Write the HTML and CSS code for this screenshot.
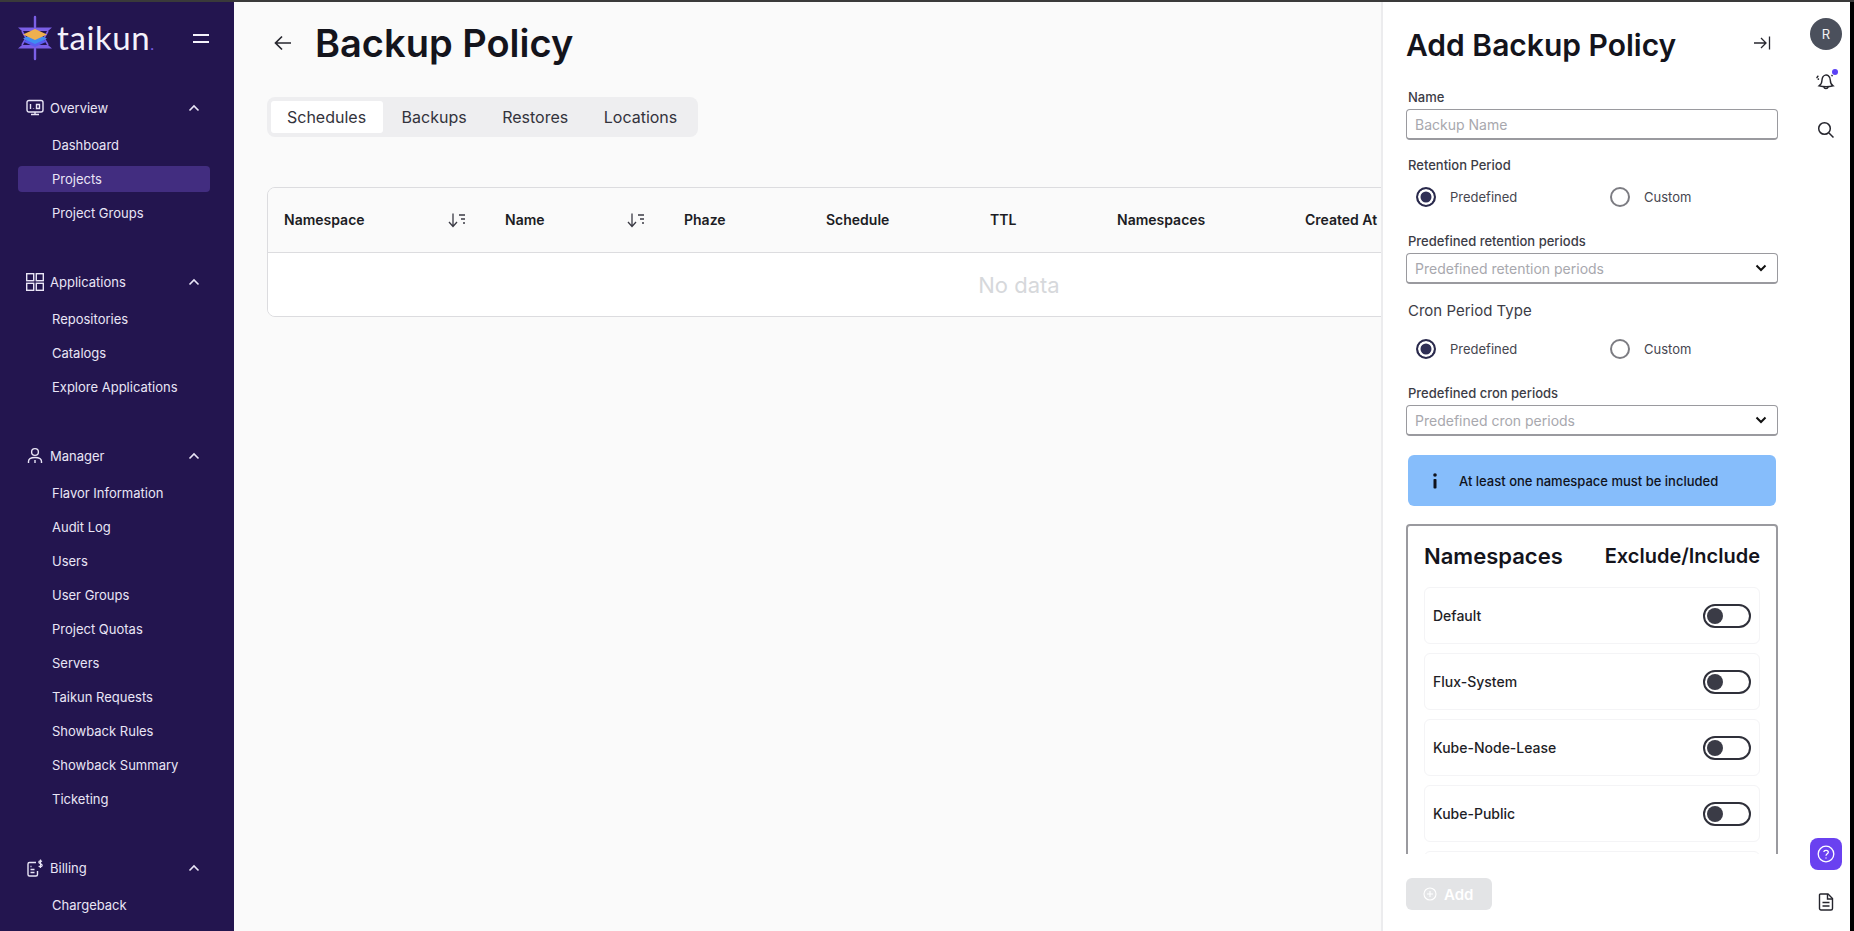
FILE: index.html
```html
<!DOCTYPE html>
<html lang="en">
<head>
    <meta charset="UTF-8">
    <meta name="viewport" content="width=device-width, initial-scale=1.0">
    <title>Backup Policy - Taikun</title>
    <link rel="stylesheet" href="styles.css">
</head>
<body>
    <div class="app">
        <!-- Sidebar -->
        <aside class="sidebar">
            <div class="brand">
                <svg class="brand-mark" width="38" height="46" viewBox="0 0 38 46" fill="none">
                    <path d="M19 2V12M19 34V44" stroke="#7b5fe6" stroke-width="2.4" stroke-linecap="round"/>
                    <path d="M2 12.500H36L32 16H6ZM2 33.500H36L32 30H6Z" fill="#7b5fe6"/>
                    <path d="M6 16L10 23L6 30M32 16L28 23L32 30" stroke="#7b5fe6" stroke-width="1.6"/>
                    <path d="M7 26.500L19 21L31 26.500L19 32Z" fill="#5a5cf0"/>
                    <path d="M7 23.500L19 18L31 23.500L19 29Z" fill="#3f8df2"/>
                    <path d="M7 19.500L19 14L31 19.500L19 25Z" fill="#eeb04f"/>
                </svg>
                <span class="brand-name">taikun<em>.</em></span>
                <button class="menu-btn" aria-label="Menu"><span></span><span></span></button>
            </div>

            <nav class="nav">
                <section class="nav-group">
                    <div class="nav-head">
                        <svg class="nav-icon" width="18" height="18" viewBox="0 0 18 18" fill="none" stroke="currentColor" stroke-width="1.4"><rect x="1" y="1.5" width="16" height="11.5" rx="2"/><path d="M5 15.5H13M9 13V15.5"/><path d="M4.5 5V10M7.5 9.5V10M10.5 5.5H13.5V9.5H10.5Z"/></svg>
                        <span>Overview</span>
                        <svg class="nav-chevron" width="12" height="8" viewBox="0 0 12 8" fill="none" stroke="currentColor" stroke-width="1.6"><path d="M1.5 6.5L6 2L10.5 6.5"/></svg>
                    </div>
                    <a class="nav-item">Dashboard</a>
                    <a class="nav-item active">Projects</a>
                    <a class="nav-item">Project Groups</a>
                </section>

                <section class="nav-group">
                    <div class="nav-head">
                        <svg class="nav-icon" width="18" height="18" viewBox="0 0 18 18" fill="none" stroke="currentColor" stroke-width="1.4"><rect x="0.7" y="0.7" width="7" height="7"/><rect x="10.3" y="0.7" width="7" height="7"/><rect x="0.7" y="10.3" width="7" height="7"/><rect x="10.3" y="10.3" width="7" height="7"/></svg>
                        <span>Applications</span>
                        <svg class="nav-chevron" width="12" height="8" viewBox="0 0 12 8" fill="none" stroke="currentColor" stroke-width="1.6"><path d="M1.5 6.5L6 2L10.5 6.5"/></svg>
                    </div>
                    <a class="nav-item">Repositories</a>
                    <a class="nav-item">Catalogs</a>
                    <a class="nav-item">Explore Applications</a>
                </section>

                <section class="nav-group">
                    <div class="nav-head">
                        <svg class="nav-icon" width="18" height="18" viewBox="0 0 18 18" fill="none" stroke="currentColor" stroke-width="1.4"><circle cx="9" cy="5" r="3.4"/><path d="M2.5 16V14.5C2.5 12 5 10.5 9 10.5S15.500 12 15.500 14.500V16M9 13V16"/></svg>
                        <span>Manager</span>
                        <svg class="nav-chevron" width="12" height="8" viewBox="0 0 12 8" fill="none" stroke="currentColor" stroke-width="1.6"><path d="M1.5 6.5L6 2L10.5 6.5"/></svg>
                    </div>
                    <a class="nav-item">Flavor Information</a>
                    <a class="nav-item">Audit Log</a>
                    <a class="nav-item">Users</a>
                    <a class="nav-item">User Groups</a>
                    <a class="nav-item">Project Quotas</a>
                    <a class="nav-item">Servers</a>
                    <a class="nav-item">Taikun Requests</a>
                    <a class="nav-item">Showback Rules</a>
                    <a class="nav-item">Showback Summary</a>
                    <a class="nav-item">Ticketing</a>
                </section>

                <section class="nav-group">
                    <div class="nav-head">
                        <svg class="nav-icon" width="18" height="18" viewBox="0 0 18 18" fill="none" stroke="currentColor" stroke-width="1.4"><path d="M10 3.500H3.500A1.500 1.500 0 0 0 2 5V15.500A1.500 1.500 0 0 0 3.500 17H10A1.500 1.500 0 0 0 11.500 15.500V12"/><path d="M4.500 7.500H5.500M4.500 10.500H8.500M4.500 13.500H8.500"/><path d="M16 2.500C15 1.500 13 1.500 12.800 3S16.500 4.800 16.200 6.500C16 8 13.800 8 12.700 7M14.500 0.500V9" stroke-width="1.200"/></svg>
                        <span>Billing</span>
                        <svg class="nav-chevron" width="12" height="8" viewBox="0 0 12 8" fill="none" stroke="currentColor" stroke-width="1.6"><path d="M1.5 6.5L6 2L10.5 6.5"/></svg>
                    </div>
                    <a class="nav-item">Chargeback</a>
                </section>
            </nav>
        </aside>

        <main class="main">
            <div class="page-title">
                <svg class="back-icon" width="18" height="16" viewBox="0 0 18 16" fill="none" stroke="#27272f" stroke-width="1.7"><path d="M17 8H1.500M8 1.500L1.500 8L8 14.500"/></svg>
                <h1>Backup Policy</h1>
            </div>

            <div class="tabs">
                <button class="tab active">Schedules</button>
                <button class="tab">Backups</button>
                <button class="tab">Restores</button>
                <button class="tab">Locations</button>
            </div>

            <div class="table-wrap">
                <table class="data-table">
                    <thead>
                        <tr>
                            <th>
                                <div class="th-sort">Namespace
                                    <svg width="18" height="16" viewBox="0 0 18 16" fill="none" stroke="#3a3a44" stroke-width="1.300"><path d="M5 1.500V14M1 10L5 14.500L9 10M11 3H17M13 7H17M15 11H17"/></svg>
                                </div>
                            </th>
                            <th>
                                <div class="th-sort">Name
                                    <svg width="18" height="16" viewBox="0 0 18 16" fill="none" stroke="#3a3a44" stroke-width="1.300"><path d="M5 1.500V14M1 10L5 14.500L9 10M11 3H17M13 7H17M15 11H17"/></svg>
                                </div>
                            </th>
                            <th>Phaze</th>
                            <th>Schedule</th>
                            <th>TTL</th>
                            <th>Namespaces</th>
                            <th>Created At</th>
                        </tr>
                    </thead>
                    <tbody>
                        <tr><td colspan="7" class="no-data">No data</td></tr>
                    </tbody>
                </table>
            </div>
        </main>

        <!-- Add policy drawer -->
        <aside class="drawer">
            <div class="drawer-head">
                <h2>Add Backup Policy</h2>
                <svg class="collapse-icon" width="18" height="16" viewBox="0 0 18 16" fill="none" stroke="#27272f" stroke-width="1.300"><path d="M1 8H13M8 3L13 8L8 13M16.500 1.500V14.500"/></svg>
            </div>

            <form class="drawer-form">
                <label class="field-label">Name</label>
                <div class="input">Backup Name</div>

                <label class="field-label retention">Retention Period</label>
                <div class="radio-row">
                    <div class="radio checked"><i></i>Predefined</div>
                    <div class="radio"><i></i>Custom</div>
                </div>

                <label class="field-label spaced">Predefined retention periods</label>
                <div class="input select">Predefined retention periods
                    <svg width="12" height="8" viewBox="0 0 12 8" fill="none" stroke="#111" stroke-width="2"><path d="M1.500 1.500L6 6L10.500 1.500"/></svg>
                </div>

                <div class="cron-title">Cron Period Type</div>
                <div class="radio-row">
                    <div class="radio checked"><i></i>Predefined</div>
                    <div class="radio"><i></i>Custom</div>
                </div>

                <label class="field-label spaced">Predefined cron periods</label>
                <div class="input select">Predefined cron periods
                    <svg width="12" height="8" viewBox="0 0 12 8" fill="none" stroke="#111" stroke-width="2"><path d="M1.500 1.500L6 6L10.500 1.500"/></svg>
                </div>

                <div class="alert">
                    <svg width="4" height="16" viewBox="0 0 4 16" fill="#10131c"><circle cx="2" cy="2" r="1.800"/><rect x="0.500" y="6" width="3" height="9.500" rx="0.800"/></svg>
                    <span>At least one namespace must be included</span>
                </div>

                <div class="ns-box">
                    <div class="ns-head">
                        <h3>Namespaces</h3>
                        <h4>Exclude/Include</h4>
                    </div>
                    <div class="ns-list">
                        <div class="ns-item">Default<span class="toggle"></span></div>
                        <div class="ns-item">Flux-System<span class="toggle"></span></div>
                        <div class="ns-item">Kube-Node-Lease<span class="toggle"></span></div>
                        <div class="ns-item">Kube-Public<span class="toggle"></span></div>
                        <div class="ns-item"></div>
                    </div>
                </div>
            </form>

            <div class="drawer-foot">
                <button class="add-btn" disabled>
                    <svg width="14" height="14" viewBox="0 0 14 14" fill="none" stroke="#fff" stroke-width="1.100"><circle cx="7" cy="7" r="6"/><path d="M7 4V10M4 7H10"/></svg>
                    Add
                </button>
            </div>
        </aside>

        <!-- Right rail -->
        <div class="rail">
            <div class="avatar">R</div>
            <div class="rail-btn bell">
                <svg width="24" height="24" viewBox="0 0 22 22" fill="none" stroke="#25252d" stroke-width="1.300"><path d="M4.500 15.500L6.500 13.500C7.500 12 7 9.500 8 7.500C9 5.500 11.500 5 13 6C14.500 7 15 8.500 15 10.500C15 12.500 16 14.500 17.500 15.500C13.500 16.500 9 16.500 4.500 15.500Z"/><path d="M9 16.500C9.500 18.500 12.500 18.500 13 16.300M2.500 8.500C2.800 7.500 3.300 6.800 4 6.200M3.800 10C3.900 9.500 4.100 9 4.400 8.700M16 5.500C16.500 5.800 16.800 6.200 17 6.700"/></svg>
                <span class="bell-dot"></span>
            </div>
            <div class="rail-btn search">
                <svg width="18" height="18" viewBox="0 0 18 18" fill="none" stroke="#25252d" stroke-width="1.500"><circle cx="7.500" cy="7.500" r="5.800"/><path d="M12 12L16.500 16.500"/></svg>
            </div>
            <div class="help-btn">
                <svg width="18" height="18" viewBox="0 0 18 18" fill="none" stroke="#fff" stroke-width="1.300"><circle cx="9" cy="9" r="7.800"/><path d="M6.800 7C7 4.800 11.300 4.800 11.300 7.200C11.300 8.800 9 8.800 9 10.800M9 12.500V13.500"/></svg>
            </div>
            <div class="rail-btn">
                <svg width="16" height="18" viewBox="0 0 16 18" fill="none" stroke="#25252d" stroke-width="1.400"><path d="M2.500 1H10L14.500 5.500V15.500A1.500 1.500 0 0 1 13 17H3A1.500 1.500 0 0 1 1.500 15.500V2A1 1 0 0 1 2.500 1Z"/><path d="M9.500 1V6H14.500M4.500 9.500H11.500M4.500 13H11.500"/></svg>
            </div>
        </div>
    </div>
</body>
</html>
```

FILE: styles.css
```css
* {
    box-sizing: border-box;
}

html,
body {
    height: 100%;
    margin: 0;
    overflow: hidden;
}

body {
    background: #000;
    border-top: 2px solid #3a3a3a;
    font-family: Inter, "Noto Sans", sans-serif;
    color: #14141c;
}

h1,
h2,
h3,
h4 {
    margin: 0;
}

.app {
    display: flex;
    height: 929px;
    width: 1850px;
}

/* Sidebar */
.sidebar {
    flex: 0 0 234px;
    overflow: hidden;
    background: #23154f;
    color: #e9e5f6;
}

.brand {
    display: flex;
    align-items: center;
    height: 64px;
    padding: 12px 0 0 16px;
}

.brand-mark {
    flex: none;
    margin-bottom: 4px;
}

.brand-name {
    margin-left: 3px;
    font-family: Lato, sans-serif;
    font-size: 33px;
    line-height: 40px;
    letter-spacing: 0.6px;
    color: #f4f2fb;
}

.brand-name em {
    font-style: normal;
    font-size: 16px;
    color: #7b5fe6;
}

.menu-btn {
    display: flex;
    flex-direction: column;
    gap: 5px;
    width: 16px;
    margin: 0 0 4px 38px;
    padding: 0;
    border: 0;
    background: none;
}

.menu-btn span {
    display: block;
    height: 2px;
    background: #f4f2fb;
}

.nav {
    padding-top: 25px;
}

.nav-group {
    display: flex;
    flex-direction: column;
    gap: 8px;
    margin-bottom: 39px;
}

.nav-head {
    display: flex;
    align-items: center;
    height: 34px;
    margin-bottom: -1px;
    padding-left: 26px;
    font-size: 13px;
}

.nav-icon {
    flex: none;
    margin-right: 6px;
}

.nav-chevron {
    margin-left: auto;
    margin-right: 34px;
}

.nav-item {
    display: flex;
    align-items: center;
    height: 26px;
    margin: 0 24px 0 18px;
    padding-left: 34px;
    border-radius: 4px;
    font-size: 13px;
}

.nav-item.active {
    background: #422d80;
}

/* Main */
.main {
    flex: 1;
    min-width: 0;
    overflow: hidden;
    padding: 0 0 0 33px;
    background: #fafafa;
}

.page-title {
    display: flex;
    align-items: center;
    margin-top: 17px;
    height: 48px;
    padding-left: 7px;
}

.back-icon {
    margin-right: 23px;
}

.page-title h1 {
    font-size: 38px;
    font-weight: 600;
    line-height: 48px;
    color: #14141c;
}

.tabs {
    display: inline-flex;
    gap: 3px;
    height: 40px;
    margin-top: 30px;
    padding: 4px;
    border-radius: 8px;
    background: #eeeef0;
}

.tab {
    height: 32px;
    padding: 0 16.5px 0 16px;
    border: 0;
    border-radius: 3px;
    background: none;
    font-family: inherit;
    font-size: 16px;
    color: #33333c;
}

.tab.active {
    background: #fff;
}

.table-wrap {
    width: 1504px;
    margin-top: 50px;
    overflow: hidden;
    border: 1px solid #dcdcdf;
    border-radius: 8px;
}

.data-table {
    width: 100%;
    border-collapse: collapse;
    table-layout: fixed;
}

.data-table th {
    height: 64px;
    padding: 0 0 0 16px;
    border-bottom: 1px solid #dcdcdf;
    background: #fafafa;
    font-size: 14px;
    font-weight: 600;
    text-align: left;
    color: #1c1c24;
}

.data-table th:nth-child(1) { width: 221px; }
.data-table th:nth-child(2) { width: 179px; }
.data-table th:nth-child(3) { width: 142px; }
.data-table th:nth-child(4) { width: 164px; }
.data-table th:nth-child(5) { width: 127px; }
.data-table th:nth-child(6) { width: 188px; }

.th-sort {
    display: flex;
    align-items: center;
    justify-content: space-between;
    padding-right: 23px;
}

.no-data {
    height: 64px;
    padding-top: 2px;
    background: #fff;
    font-size: 22px;
    text-align: center;
    color: #d6d8db;
}

/* Drawer */
.drawer {
    display: flex;
    flex: 0 0 421px;
    flex-direction: column;
    padding-left: 25px;
    background: #fff;
    box-shadow: inset 2px 0 0 #ececee;
}

.drawer-head {
    display: flex;
    align-items: center;
    justify-content: space-between;
    height: 86px;
    padding: 23px 31px 23px 0;
    flex: none;
}

.drawer-head h2 {
    font-size: 30px;
    font-weight: 600;
    line-height: 40px;
    color: #14141c;
}

.collapse-icon {
    margin-bottom: 4px;
}

.drawer-form {
    height: 766px;
    width: 372px;
    overflow: hidden;
    flex: none;
}

.field-label {
    display: block;
    height: 18px;
    margin: 0 0 3px 2px;
    font-size: 13px;
    font-weight: 500;
    line-height: 18px;
    color: #3c3c46;
}

.field-label.retention {
    margin-top: 16px;
}

.field-label.spaced {
    margin-top: 17px;
}

.input {
    display: flex;
    align-items: center;
    justify-content: space-between;
    height: 31px;
    padding: 0 10px 0 8px;
    border: 1px solid #9a9a9f;
    border-bottom-width: 2px;
    border-radius: 4px;
    background: #fff;
    font-size: 14px;
    color: #a8a8ae;
}

.radio-row {
    display: flex;
    height: 36px;
    margin-top: 5px;
    padding-left: 10px;
}

.radio {
    display: flex;
    flex: none;
    align-items: center;
    width: 194px;
    font-size: 13px;
    color: #46464f;
}

.radio i {
    width: 20px;
    height: 20px;
    margin-right: 14px;
    border: 2px solid #7c7c82;
    border-radius: 50%;
    background: #fff;
}

.radio.checked i {
    border-color: #2a2a4c;
    box-shadow: inset 0 0 0 2.5px #fff;
    background: #2f2f55;
}

.cron-title {
    height: 18px;
    margin: 18px 0 11px 2px;
    font-size: 15px;
    font-weight: 400;
    line-height: 18px;
    color: #3c3c46;
}

.alert {
    display: flex;
    align-items: center;
    height: 51px;
    margin: 19px 2px 0 2px;
    padding-left: 25px;
    border-radius: 6px;
    background: #86bdfb;
    font-size: 13px;
    font-weight: 500;
    color: #10131c;
}

.alert span {
    margin-left: 22px;
}

.ns-box {
    margin-top: 18px;
    padding: 12px 16px 16px;
    border: 2px solid #9a9a9f;
    border-radius: 4px;
}

.ns-head {
    display: flex;
    align-items: center;
    justify-content: space-between;
    height: 36px;
}

.ns-head h3 {
    font-size: 22px;
    font-weight: 600;
}

.ns-head h4 {
    font-size: 20px;
    font-weight: 600;
}

.ns-list {
    display: flex;
    flex-direction: column;
    gap: 9px;
    margin-top: 13px;
}

.ns-item {
    display: flex;
    align-items: center;
    justify-content: space-between;
    height: 57px;
    padding: 0 8px;
    border: 1px solid #f4f4f6;
    border-radius: 6px;
    font-size: 14px;
    font-weight: 500;
    color: #1e1e26;
}

.toggle {
    display: block;
    width: 48px;
    height: 24px;
    border: 2px solid #2f303a;
    border-radius: 12px;
    background: #fff;
    position: relative;
}

.toggle::before {
    content: "";
    position: absolute;
    top: 2px;
    left: 2px;
    width: 16px;
    height: 16px;
    border-radius: 50%;
    background: #3a3b46;
}

.drawer-foot {
    padding-top: 24px;
}

.add-btn {
    display: flex;
    align-items: center;
    gap: 7px;
    width: 86px;
    height: 32px;
    padding-left: 17px;
    border: 0;
    border-radius: 6px;
    background: #e3e4e6;
    font-family: inherit;
    font-size: 15px;
    font-weight: 600;
    color: #fff;
}

/* Right rail */
.rail {
    display: flex;
    flex: 0 0 48px;
    flex-direction: column;
    align-items: center;
    padding: 16px 8px 5px 8px;
    background: #fff;
}

.avatar {
    display: flex;
    align-items: center;
    justify-content: center;
    width: 32px;
    height: 32px;
    margin-bottom: 7px;
    border-radius: 50%;
    background: #4b505c;
    font-size: 13px;
    color: #f2f2f4;
}

.rail-btn {
    display: flex;
    align-items: center;
    justify-content: center;
    width: 32px;
    height: 48px;
    position: relative;
}

.rail-btn.search {
    margin-top: 1px;
}

.bell-dot {
    position: absolute;
    top: 12px;
    right: 4px;
    width: 6px;
    height: 6px;
    border-radius: 50%;
    background: #5b41f5;
}

.help-btn {
    display: flex;
    align-items: center;
    justify-content: center;
    width: 32px;
    height: 32px;
    margin-top: auto;
    margin-bottom: 8px;
    border-radius: 8px;
    background: #6a41f0;
}
```
